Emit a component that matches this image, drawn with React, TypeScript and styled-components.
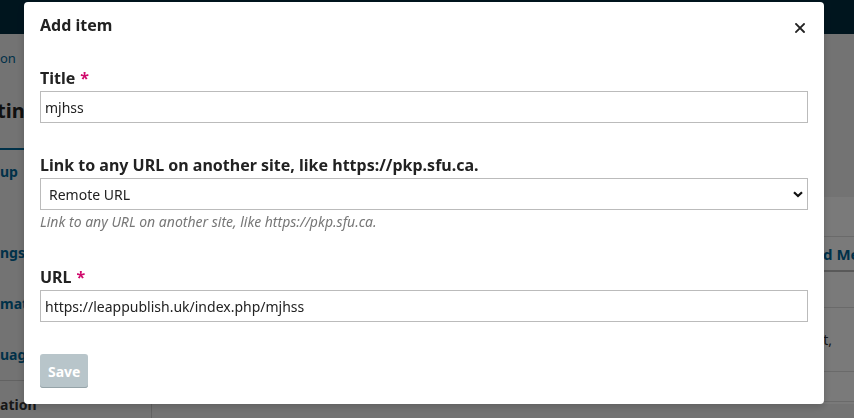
import React from "react";
import styled, { createGlobalStyle } from "styled-components";

const GlobalStyle = createGlobalStyle`
  html, body {
    margin: 0;
    padding: 0;
    overflow: hidden;
    background: #f0f0f0;
  }
  body {
    font-family: "Noto Sans", "Open Sans", sans-serif;
    color: #222;
  }
  * { box-sizing: border-box; }
`;

const Page = styled.div`
  width: 900px;
  height: 418px;
  background: #f0f0f0;
`;

const TopBar = styled.header`
  height: 34px;
  background: #002c40;
`;

const Breadcrumb = styled.div`
  padding-top: 14px;
  font-size: 13px;
  line-height: 20px;
  color: #006798;
  white-space: nowrap;
`;

const Heading = styled.h1`
  margin: 28px 0 0;
  font-size: 20px;
  line-height: 30px;
  font-weight: 700;
  color: #222;
  white-space: nowrap;
  text-indent: -3px;
`;

const TabsBar = styled.div`
  height: 24px;
  border-bottom: 2px solid #006798;
  width: 152px;
`;

const Columns = styled.div`
  display: grid;
  grid-template-columns: 152px 1fr;
`;

const Sidebar = styled.nav`
  display: flex;
  flex-direction: column;
  border-right: 1px solid #ccc;
  height: 268px;
`;

const NavItem = styled.div<{ $gap: number; $dark?: boolean }>`
  margin-top: ${(p) => p.$gap}px;
  font-size: 14px;
  line-height: 20px;
  font-weight: 700;
  color: ${(p) => (p.$dark ? "#333" : "#006798")};
  white-space: nowrap;
`;

const NavDivider = styled.hr<{ $gap: number }>`
  margin: ${(p) => p.$gap}px 0 0;
  border: 0;
  border-top: 1px solid #ccc;
`;

const Main = styled.main`
  padding-top: 47px;
`;

const Card = styled.section`
  background: #fff;
  height: 207px;
`;

const CardHeader = styled.div`
  height: 40px;
  border-bottom: 1px solid #ddd;
`;

const Toolbar = styled.div`
  height: 35px;
  display: flex;
  justify-content: flex-end;
  align-items: center;
  padding-right: 13px;
  border-bottom: 2px solid #bbb;
`;

const LinkButton = styled.span`
  padding: 0 8px;
  font-size: 15px;
  font-weight: 700;
  color: #006798;
  white-space: nowrap;
`;

const ListRow = styled.div<{ $h: number }>`
  height: ${(p) => p.$h}px;
  display: flex;
  justify-content: flex-end;
  align-items: center;
  padding-right: 68px;
  border-bottom: 1px solid #ddd;
  font-size: 14px;
  color: #333;
  white-space: nowrap;
`;

const Overlay = styled.div`
  position: fixed;
  inset: 0;
  background: rgba(0, 0, 0, 0.52);
`;

const Modal = styled.div`
  margin: 2px 0 0 24px;
  width: 800px;
  height: 402px;
  background: #fff;
  border-radius: 4px;
  box-shadow: 0 2px 8px rgba(0, 0, 0, 0.2);
  display: flex;
  flex-direction: column;
`;

const ModalHeader = styled.div`
  height: 35px;
  display: flex;
  justify-content: space-between;
  align-items: flex-start;
  padding: 11px 12px 0 16px;
`;

const ModalTitle = styled.h2`
  margin: 0;
  font-size: 16px;
  line-height: 24px;
  font-weight: 700;
  color: #222;
`;

const CloseButton = styled.button`
  margin-top: 3px;
  width: 24px;
  height: 24px;
  padding: 0;
  border: 0;
  background: transparent;
  display: flex;
  align-items: center;
  justify-content: center;
  cursor: pointer;
`;

const ModalBody = styled.form`
  padding: 29px 16px 16px;
  display: flex;
  flex-direction: column;
`;

const Field = styled.div<{ $after: number }>`
  margin-bottom: ${(p) => p.$after}px;
`;

const Label = styled.label`
  display: block;
  margin-bottom: 1px;
  font-size: 16px;
  line-height: 24px;
  font-weight: 700;
  color: #222;
`;

const Required = styled.span`
  margin-left: 5px;
  color: #d00a6c;
`;

const TextInput = styled.input`
  display: block;
  width: 100%;
  height: 32px;
  padding: 0 4px;
  border: 1px solid #bbb;
  border-radius: 0;
  font-family: inherit;
  font-size: 14px;
  color: #222;
  background: #fff;
  outline: none;
`;

const SelectWrap = styled.div`
  position: relative;
`;

const Select = styled.select`
  display: block;
  width: 100%;
  height: 32px;
  padding: 0 24px 0 8px;
  border: 1px solid #bbb;
  border-radius: 0;
  appearance: none;
  -webkit-appearance: none;
  font-family: inherit;
  font-size: 14px;
  color: #222;
  background: #fff;
  outline: none;
`;

const Chevron = styled.svg`
  position: absolute;
  right: 5px;
  top: 13px;
  pointer-events: none;
`;

const Help = styled.div`
  margin-top: 2px;
  font-size: 14px;
  line-height: 20px;
  font-style: italic;
  color: #777;
`;

const Actions = styled.div`
  display: flex;
`;

const SaveButton = styled.button`
  height: 34px;
  padding: 0 8px;
  border: 0;
  border-radius: 3px;
  background: #b8c5ca;
  box-shadow: inset 0 -1px 0 #95a3a8;
  font-family: inherit;
  font-size: 14px;
  font-weight: 700;
  color: #fff;
`;

export default function App() {
  return (
    <>
      <GlobalStyle />
      <Page>
        <TopBar />
        <Breadcrumb>on</Breadcrumb>
        <Heading>tings</Heading>
        <TabsBar />
        <Columns>
          <Sidebar>
            <NavItem $gap={12}>up</NavItem>
            <NavItem $gap={61}>ngs</NavItem>
            <NavItem $gap={31}>mation</NavItem>
            <NavItem $gap={31}>uages</NavItem>
            <NavDivider $gap={15} />
            <NavItem $gap={14} $dark>
              ation
            </NavItem>
          </Sidebar>
          <Main>
            <Card>
              <CardHeader />
              <Toolbar>
                <LinkButton>Add Menu</LinkButton>
              </Toolbar>
              <ListRow $h={36} />
              <ListRow $h={64}>Announcements, Current,</ListRow>
              <ListRow $h={30} />
            </Card>
          </Main>
        </Columns>
      </Page>
      <Overlay>
        <Modal role="dialog" aria-label="Add item">
          <ModalHeader>
            <ModalTitle>Add item</ModalTitle>
            <CloseButton type="button" aria-label="Close">
              <svg width="10" height="10" viewBox="0 0 10 10">
                <path d="M1 1 L9 9 M9 1 L1 9" stroke="#222" strokeWidth="1.8" strokeLinecap="square" />
              </svg>
            </CloseButton>
          </ModalHeader>
          <ModalBody onSubmit={(e) => e.preventDefault()}>
            <Field $after={30}>
              <Label>
                Title<Required>*</Required>
              </Label>
              <TextInput defaultValue="mjhss" />
            </Field>
            <Field $after={33}>
              <Label>Link to any URL on another site, like https://pkp.sfu.ca.</Label>
              <SelectWrap>
                <Select defaultValue="remote">
                  <option value="remote">Remote URL</option>
                </Select>
                <Chevron width="10" height="7" viewBox="0 0 10 7">
                  <path d="M1 1.2 L5 5 L9 1.2" fill="none" stroke="#111" strokeWidth="2.2" />
                </Chevron>
              </SelectWrap>
              <Help>Link to any URL on another site, like https://pkp.sfu.ca.</Help>
            </Field>
            <Field $after={32}>
              <Label>
                URL<Required>*</Required>
              </Label>
              <TextInput defaultValue="https://leappublish.uk/index.php/mjhss" />
            </Field>
            <Actions>
              <SaveButton type="submit" disabled>
                Save
              </SaveButton>
            </Actions>
          </ModalBody>
        </Modal>
      </Overlay>
    </>
  );
}
